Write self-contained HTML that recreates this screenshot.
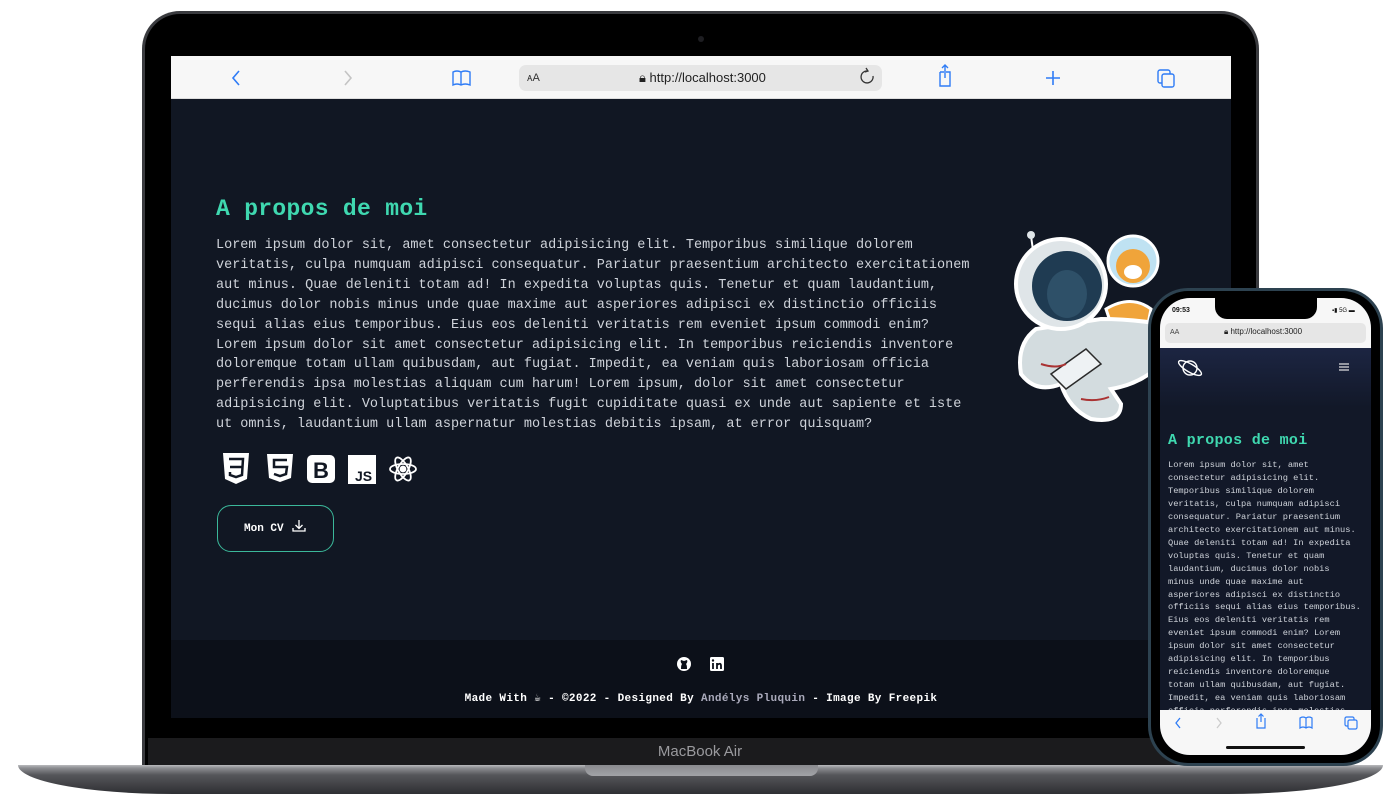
<!DOCTYPE html>
<html><head><meta charset="utf-8"><style>
*{margin:0;padding:0;box-sizing:border-box}
body{width:1400px;height:804px;background:#fff;position:relative;overflow:hidden;font-family:"Liberation Sans",sans-serif}
.abs{position:absolute}
.mono{font-family:"Liberation Mono",monospace}
</style></head><body>
<!-- laptop lid -->
<div class="abs" style="left:142px;top:11px;width:1117px;height:760px;border-radius:38px 38px 0 0;background:#3a3b3f"></div>
<div class="abs" style="left:145px;top:14px;width:1111px;height:757px;border-radius:35px 35px 0 0;background:#000"></div>
<div class="abs" style="left:698px;top:36px;width:6px;height:6px;border-radius:50%;background:#1e1e22"></div>
<!-- chin -->
<div class="abs" style="left:148px;top:738px;width:1105px;height:30px;background:#1b1b1d"></div>
<div class="abs" style="left:0;top:743px;width:1400px;text-align:center;color:#9a9a9e;font-size:15px">MacBook Air</div>
<!-- base -->
<div class="abs" style="left:18px;top:765px;width:1365px;height:29px;border-radius:0 0 160px 160px/0 0 30px 30px;background:linear-gradient(#b9babd 0,#8d8e92 3px,#55565a 10px,#2e2f33 29px)"></div>
<div class="abs" style="left:585px;top:765px;width:233px;height:11px;border-radius:0 0 8px 8px;background:linear-gradient(#8a8b8f,#a2a3a7)"></div>
<!-- screen -->
<div class="abs" style="left:171px;top:56px;width:1060px;height:662px;background:#111723;overflow:hidden">
  <div class="abs" style="left:0;top:0;width:1060px;height:43px;background:#f7f7f7;border-bottom:1px solid #ddd"></div>
  <svg class="abs" style="left:0;top:0" width="1060" height="43">
    <path d="M68 15 L62 22 L68 29" stroke="#2f7cf6" stroke-width="1.6" fill="none"/>
    <path d="M174 15 L180 22 L174 29" stroke="#c4c4c4" stroke-width="1.6" fill="none"/>
    <path d="M282 16 Q286 14 290 16 Q294 14 299 16 L299 29 Q294 27 290 29 Q286 27 282 29Z M290 16 V29" stroke="#2f7cf6" stroke-width="1.4" fill="none"/>
    <rect x="348" y="9" width="363" height="26" rx="7" fill="#e6e6e6"/>
    <path d="M697 15 A6 6 0 1 0 702 20 M695 12 L697 15 L694 16" stroke="#333" stroke-width="1.3" fill="none"/>
    <path d="M769 16 L769 30 L779 30 L779 16 L775 16 M769 16 L773 16 M774 22 L774 9 M771 12 L774 9 L777 12" stroke="#2f7cf6" stroke-width="1.4" fill="none"/>
    <path d="M882 15 V29 M875 22 H889" stroke="#2f7cf6" stroke-width="1.6"/>
    <rect x="987" y="14" width="12" height="13" rx="2" stroke="#2f7cf6" stroke-width="1.4" fill="none"/>
    <rect x="991" y="18" width="12" height="13" rx="2" stroke="#2f7cf6" stroke-width="1.4" fill="#f7f7f7"/>
  </svg>
  <div class="abs" style="left:356px;top:16px;font-size:11px;color:#333">ᴀA</div>
  <div class="abs" style="left:468px;top:14px;font-size:13px;color:#222">🔒︎ http://localhost:3000</div>
  <div class="abs mono" style="left:45px;top:140px;font-size:23px;font-weight:bold;color:#3fd8b0;letter-spacing:0.3px">A propos de moi</div>
  <div class="abs mono" style="left:45px;top:180px;font-size:13.5px;line-height:19.9px;color:#cfd3da;white-space:pre">Lorem ipsum dolor sit, amet consectetur adipisicing elit. Temporibus similique dolorem
veritatis, culpa numquam adipisci consequatur. Pariatur praesentium architecto exercitationem
aut minus. Quae deleniti totam ad! In expedita voluptas quis. Tenetur et quam laudantium,
ducimus dolor nobis minus unde quae maxime aut asperiores adipisci ex distinctio officiis
sequi alias eius temporibus. Eius eos deleniti veritatis rem eveniet ipsum commodi enim?
Lorem ipsum dolor sit amet consectetur adipisicing elit. In temporibus reiciendis inventore
doloremque totam ullam quibusdam, aut fugiat. Impedit, ea veniam quis laboriosam officia
perferendis ipsa molestias aliquam cum harum! Lorem ipsum, dolor sit amet consectetur
adipisicing elit. Voluptatibus veritatis fugit cupiditate quasi ex unde aut sapiente et iste
ut omnis, laudantium ullam aspernatur molestias debitis ipsam, at error quisquam?</div>
  <svg class="abs" style="left:50px;top:395px" width="200" height="36">
    <path d="M2 2 H28 L26 28 L15 33 L4 28Z" fill="#fff"/>
    <path d="M8 8 H22 L21 24 L15 26 L9 24 L9 21 M9 16 H21" stroke="#111723" stroke-width="2.5" fill="none"/>
    <path d="M46 3 H72 L70 27 L59 31 L48 27Z" fill="#fff"/>
    <path d="M66 9 H53 V16 H66 L65 23 L59 25 L53 23" stroke="#111723" stroke-width="2.5" fill="none"/>
    <rect x="86" y="4" width="28" height="28" rx="5" fill="#fff"/>
    <text x="92" y="27" font-family="Liberation Sans" font-weight="bold" font-size="22" fill="#111723">B</text>
    <rect x="127" y="4" width="28" height="29" fill="#fff"/>
    <text x="134" y="30" font-family="Liberation Sans" font-weight="bold" font-size="14" fill="#111723">JS</text>
    <g transform="translate(182,18)" stroke="#fff" stroke-width="1.8" fill="none">
      <ellipse rx="13" ry="5"/><ellipse rx="13" ry="5" transform="rotate(60)"/><ellipse rx="13" ry="5" transform="rotate(-60)"/>
      <circle r="2.5" fill="#fff"/>
    </g>
  </svg>
  <div class="abs" style="left:46px;top:449px;width:117px;height:47px;border:1.5px solid #3bb89a;border-radius:14px"></div>
  <div class="abs mono" style="left:73px;top:467px;font-size:11px;font-weight:bold;color:#fff">Mon CV</div>
  <svg class="abs" style="left:120px;top:462px" width="16" height="16"><path d="M8 2 V10 M4.5 7 L8 10.5 L11.5 7 M2 10 V13 H14 V10" stroke="#fff" stroke-width="1.3" fill="none"/></svg>
  <!-- astronaut -->
  <svg class="abs" style="left:840px;top:168px" width="180" height="210">
    <line x1="20" y1="12" x2="24" y2="40" stroke="#fff" stroke-width="2"/><circle cx="20" cy="11" r="4" fill="#dfe5e8"/>
    <path d="M95 85 Q120 70 140 85 L135 110 Q115 105 100 100Z" fill="#f0a43a" stroke="#fff" stroke-width="3"/>
    <path d="M25 105 Q5 120 10 150 Q25 170 50 160 Q58 185 80 195 Q110 200 110 180 L100 165 Q130 160 150 140 L150 100 Q120 95 90 95Z" fill="#d3dcdf" stroke="#fff" stroke-width="4"/>
    <path d="M40 150 L75 125 L90 140 L55 165Z" fill="#eef2f4" stroke="#2a2a2a" stroke-width="1.5"/>
    <path d="M30 140 Q45 145 55 140 M70 175 Q85 178 98 173" stroke="#a33" stroke-width="2" fill="none"/>
    <circle cx="50" cy="60" r="45" fill="#dfe5e8" stroke="#fff" stroke-width="4"/>
    <circle cx="56" cy="62" r="35" fill="#1f3b52"/>
    <ellipse cx="56" cy="70" rx="20" ry="24" fill="#2e5068"/>
    <circle cx="122" cy="37" r="25" fill="#bfe2f2" stroke="#fff" stroke-width="3"/>
    <circle cx="122" cy="42" r="17" fill="#f0a43a"/>
    <ellipse cx="122" cy="48" rx="9" ry="7" fill="#fff"/>
  </svg>
  <!-- footer -->
  <div class="abs" style="left:0;top:584px;width:1060px;height:78px;background:#0c1019"></div>
  <svg class="abs" style="left:506px;top:600px" width="50" height="16">
    <circle cx="7" cy="8" r="7" fill="#fff"/><path d="M4 13 Q4 9 5 8 Q3 6 4 4 L7 5 L10 4 Q11 6 9 8 Q10 9 10 13" fill="#0c1019"/>
    <rect x="33" y="1" width="14" height="14" rx="1.5" fill="#fff"/><path d="M36 7 V13 M40 13 V7 M40 9 Q44 6 44 10 V13" stroke="#0c1019" stroke-width="1.8" fill="none"/><circle cx="36" cy="4.5" r="1.2" fill="#0c1019"/>
  </svg>
  <div class="abs mono" style="left:0;top:635px;width:1060px;text-align:center;font-size:11px;font-weight:bold;color:#fff;letter-spacing:0.35px">Made With ☕ - ©2022 - Designed By <span style="color:#aab">Andélys Pluquin</span> - Image By Freepik</div>
</div>
<!-- phone -->
<div class="abs" style="left:1148px;top:288px;width:235px;height:478px;border-radius:40px;background:#2d4250"></div>
<div class="abs" style="left:1151px;top:291px;width:229px;height:472px;border-radius:37px;background:#000"></div>
<div class="abs" style="left:1160px;top:298px;width:211px;height:457px;border-radius:30px;background:#121828;overflow:hidden">
  <div class="abs" style="left:0;top:0;width:211px;height:50px;background:#f7f7f7"></div>
  <div class="abs" style="left:55px;top:0;width:102px;height:21px;border-radius:0 0 12px 12px;background:#000"></div>
  <div class="abs" style="left:12px;top:9px;font-size:7px;font-weight:bold;color:#111">09:53</div>
  <div class="abs" style="left:172px;top:9px;font-size:6px;color:#111">▪▮ 5G ▬</div>
  <div class="abs" style="left:5px;top:25px;width:201px;height:20px;border-radius:5px;background:#e6e6e6"></div>
  <div class="abs" style="left:10px;top:31px;font-size:7px;color:#444">AA</div>
  <div class="abs" style="left:64px;top:29px;font-size:8px;color:#222">🔒︎ http://localhost:3000</div>
  <div class="abs" style="left:0;top:50px;width:211px;height:60px;background:linear-gradient(#1c2542,#121828)"></div>
  <svg class="abs" style="left:16px;top:58px" width="30" height="24"><circle cx="14" cy="12" r="7" stroke="#fff" stroke-width="1.4" fill="none"/><ellipse cx="14" cy="12" rx="13" ry="4" transform="rotate(30 14 12)" stroke="#fff" stroke-width="1.4" fill="none"/></svg>
  <svg class="abs" style="left:178px;top:64px" width="12" height="10"><path d="M1 2H11M1 5H11M1 8H11" stroke="#ddd" stroke-width="1.2"/></svg>
  <div class="abs mono" style="left:8px;top:134px;font-size:15px;font-weight:bold;color:#3fd8b0;letter-spacing:0.3px">A propos de moi</div>
  <div class="abs mono" style="left:8px;top:161px;font-size:8.7px;line-height:12.95px;color:#cfd3da;white-space:pre">Lorem ipsum dolor sit, amet
consectetur adipisicing elit.
Temporibus similique dolorem
veritatis, culpa numquam adipisci
consequatur. Pariatur praesentium
architecto exercitationem aut minus.
Quae deleniti totam ad! In expedita
voluptas quis. Tenetur et quam
laudantium, ducimus dolor nobis
minus unde quae maxime aut
asperiores adipisci ex distinctio
officiis sequi alias eius temporibus.
Eius eos deleniti veritatis rem
eveniet ipsum commodi enim? Lorem
ipsum dolor sit amet consectetur
adipisicing elit. In temporibus
reiciendis inventore doloremque
totam ullam quibusdam, aut fugiat.
Impedit, ea veniam quis laboriosam
officia perferendis ipsa molestias</div>
  <div class="abs" style="left:0;top:412px;width:211px;height:45px;background:#f7f7f7"></div>
  <svg class="abs" style="left:0;top:412px" width="211" height="45">
    <path d="M20 8 L16 13 L20 18" stroke="#2f7cf6" stroke-width="1.3" fill="none"/>
    <path d="M57 8 L61 13 L57 18" stroke="#ccc" stroke-width="1.3" fill="none"/>
    <path d="M97 8 V18 H105 V8 M101 12 V4 M98.5 6.5 L101 4 L103.5 6.5" stroke="#2f7cf6" stroke-width="1.2" fill="none"/>
    <path d="M140 8 Q143 6 146 8 Q149 6 152 8 V18 Q149 16 146 18 Q143 16 140 18Z M146 8 V18" stroke="#2f7cf6" stroke-width="1.2" fill="none"/>
    <rect x="185" y="7" width="9" height="9" rx="1.5" stroke="#2f7cf6" stroke-width="1.2" fill="none"/>
    <rect x="188" y="10" width="9" height="9" rx="1.5" stroke="#2f7cf6" stroke-width="1.2" fill="#f7f7f7"/>
    <rect x="66" y="36" width="79" height="3" rx="1.5" fill="#111"/>
  </svg>
</div>
</body></html>
